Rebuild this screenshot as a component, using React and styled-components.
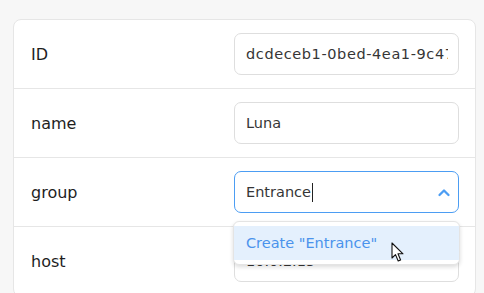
import styled, { createGlobalStyle } from 'styled-components';

const Global = createGlobalStyle`
  html, body {
    margin: 0;
    padding: 0;
    background: #f7f7f7;
    overflow: hidden;
    font-family: "DejaVu Sans", "Open Sans", sans-serif;
  }
`;

const Page = styled.div`
  padding: 19px 8px 0 13px;
`;

const Card = styled.div`
  background: #fff;
  border: 1px solid #e6e6e6;
  border-radius: 8px;
`;

const Row = styled.div`
  display: flex;
  align-items: center;
  height: 68px;
  padding: 0 16px 0 17px;
  border-bottom: 1px solid #e6e6e6;
`;

const Label = styled.div`
  flex: 1;
  font-size: 16px;
  color: #1e1e1e;
`;

const FieldWrap = styled.div`
  position: relative;
  width: 225px;
`;

const Field = styled.div`
  display: flex;
  align-items: center;
  box-sizing: border-box;
  height: 42px;
  padding: 0 ${p => (p.$focused ? '7px' : '10px')} 0 11px;
  border: 1px solid ${p => (p.$focused ? '#4c9df3' : '#dedede')};
  border-radius: 7px;
  font-size: 14.5px;
  color: #363636;
  white-space: nowrap;
  overflow: hidden;
`;

const Value = styled.span`
  flex: 1;
  overflow: hidden;
  letter-spacing: ${p => p.$spacing || 0};
`;

const Caret = styled.span`
  display: inline-block;
  width: 1px;
  height: 19px;
  background: #222;
  vertical-align: middle;
  margin-left: 1px;
`;

const Menu = styled.div`
  position: absolute;
  top: 50px;
  left: -1px;
  right: -1px;
  padding: 4px 0;
  background: #fff;
  border: 1px solid #e4e4e4;
  border-radius: 6px;
  box-shadow: 0 2px 4px rgba(0, 0, 0, 0.14);
  z-index: 2;
`;

const Option = styled.div`
  position: relative;
  height: 34px;
  display: flex;
  align-items: center;
  padding-left: 12px;
  background: #e4f0fd;
  color: #4a93ec;
  font-size: 14.5px;
`;

const Pointer = styled.svg`
  position: absolute;
  left: 157px;
  top: 16px;
`;

const rows = [
  { label: 'ID', value: 'dcdeceb1-0bed-4ea1-9c47-3e1b', spacing: '0.6px' },
  { label: 'name', value: 'Luna' },
];

export default function App() {
  return (
    <Page>
      <Global />
      <Card>
        {rows.map(r => (
          <Row key={r.label}>
            <Label>{r.label}</Label>
            <FieldWrap>
              <Field>
                <Value $spacing={r.spacing}>{r.value}</Value>
              </Field>
            </FieldWrap>
          </Row>
        ))}
        <Row>
          <Label>group</Label>
          <FieldWrap>
            <Field $focused>
              <Value>
                Entrance<Caret />
              </Value>
              <svg width="14" height="9" viewBox="0 0 14 9">
                <path d="M2.5 7 L7 2.5 L11.5 7" fill="none" stroke="#4c9df3" strokeWidth="2.3" strokeLinecap="round" strokeLinejoin="round" />
              </svg>
            </Field>
            <Menu>
              <Option>
                Create "Entrance"
                <Pointer width="13" height="21" viewBox="0 0 13 21">
                  <path d="M1 1 L1 16 L4.5 12.6 L7.2 19 L9.6 18 L7 11.8 L12 11.8 Z" fill="#fff" stroke="#111" strokeWidth="1.1" strokeLinejoin="round" />
                </Pointer>
              </Option>
            </Menu>
          </FieldWrap>
        </Row>
        <Row>
          <Label>host</Label>
          <FieldWrap>
            <Field>
              <Value>10.0.2.15</Value>
            </Field>
          </FieldWrap>
        </Row>
      </Card>
    </Page>
  );
}
